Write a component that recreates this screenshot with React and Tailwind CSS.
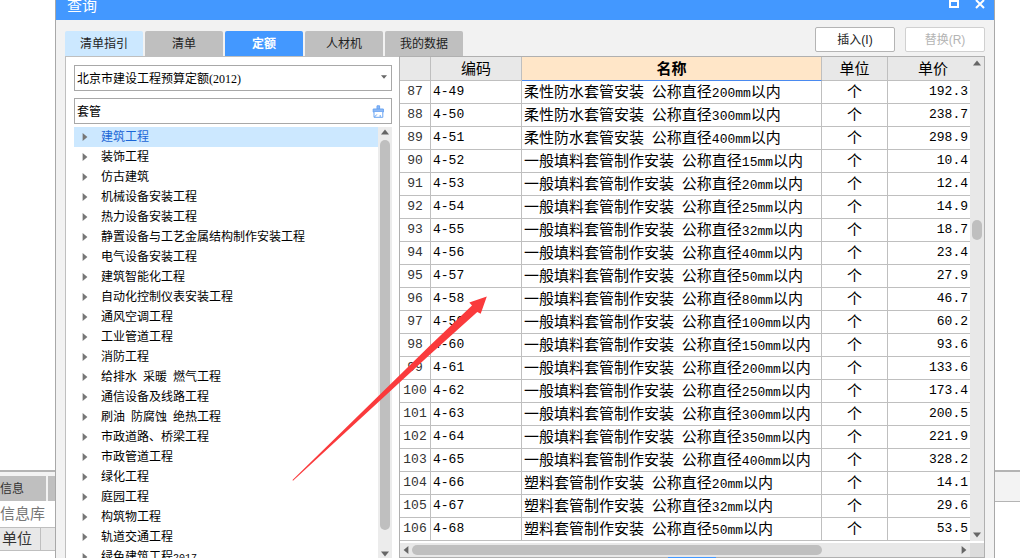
import { useState } from 'react';
import clsx from 'clsx';

const TABS = ['清单指引', '清单', '定额', '人材机', '我的数据'];

const TREE = [
  '建筑工程', '装饰工程', '仿古建筑', '机械设备安装工程', '热力设备安装工程',
  '静置设备与工艺金属结构制作安装工程', '电气设备安装工程', '建筑智能化工程',
  '自动化控制仪表安装工程', '通风空调工程', '工业管道工程', '消防工程',
  '给排水 采暖 燃气工程', '通信设备及线路工程', '刷油 防腐蚀 绝热工程',
  '市政道路、桥梁工程', '市政管道工程', '绿化工程', '庭园工程', '构筑物工程',
  '轨道交通工程', '绿色建筑工程2017',
];

const ROWS = [
  [87, '4-49', '柔性防水套管安装 公称直径200mm以内', '192.3'],
  [88, '4-50', '柔性防水套管安装 公称直径300mm以内', '238.7'],
  [89, '4-51', '柔性防水套管安装 公称直径400mm以内', '298.9'],
  [90, '4-52', '一般填料套管制作安装 公称直径15mm以内', '10.4'],
  [91, '4-53', '一般填料套管制作安装 公称直径20mm以内', '12.4'],
  [92, '4-54', '一般填料套管制作安装 公称直径25mm以内', '14.9'],
  [93, '4-55', '一般填料套管制作安装 公称直径32mm以内', '18.7'],
  [94, '4-56', '一般填料套管制作安装 公称直径40mm以内', '23.4'],
  [95, '4-57', '一般填料套管制作安装 公称直径50mm以内', '27.9'],
  [96, '4-58', '一般填料套管制作安装 公称直径80mm以内', '46.7'],
  [97, '4-59', '一般填料套管制作安装 公称直径100mm以内', '60.2'],
  [98, '4-60', '一般填料套管制作安装 公称直径150mm以内', '93.6'],
  [99, '4-61', '一般填料套管制作安装 公称直径200mm以内', '133.6'],
  [100, '4-62', '一般填料套管制作安装 公称直径250mm以内', '173.4'],
  [101, '4-63', '一般填料套管制作安装 公称直径300mm以内', '200.5'],
  [102, '4-64', '一般填料套管制作安装 公称直径350mm以内', '221.9'],
  [103, '4-65', '一般填料套管制作安装 公称直径400mm以内', '328.2'],
  [104, '4-66', '塑料套管制作安装 公称直径20mm以内', '14.1'],
  [105, '4-67', '塑料套管制作安装 公称直径32mm以内', '29.6'],
  [106, '4-68', '塑料套管制作安装 公称直径50mm以内', '53.5'],
];

const mono = "font-['Liberation_Mono',monospace]";

// Half-width runs are set in a monospace face, about half as wide as a CJK glyph
const Mixed = ({ text, size }) =>
  text.split(/([\x20-\x7e]+)/).map((part, i) =>
    i % 2 ? <span key={i} className={clsx(mono, size, 'leading-none whitespace-pre')}>{part}</span> : part
  );

const Arrow = ({ d, className }) => (
  <svg viewBox="0 0 10 10" className={clsx('shrink-0', className)} fill="currentColor" aria-hidden="true">
    <path d={d} />
  </svg>
);
const UP = 'M0 8 L5 2 L10 8Z';
const DOWN = 'M0 2 L5 8 L10 2Z';
const LEFT = 'M8 0 L2 5 L8 10Z';
const RIGHT = 'M2 0 L8 5 L2 10Z';

function BackgroundLeft() {
  return (
    <div className="w-[55px] shrink-0 flex flex-col justify-end overflow-hidden whitespace-nowrap text-[#333]">
      <div className="h-[31px] pt-1 flex gap-0.5 border-t-2 border-[#b4b4b4] bg-[#f3f3f3]">
        <div className="w-[46px] bg-[#bfbfbf] text-xs leading-[26px]">信息</div>
        <div className="flex-1 bg-[#bfbfbf]" />
      </div>
      <div className="h-[26px] text-[15px] leading-[26px] text-[#777]">信息库</div>
      <div className="h-6 flex border-y border-[#bfbfbf] bg-[#e8e8e8] text-[15px] leading-[22px]">
        <div className="w-[41px] pl-0.5 border-r border-[#bfbfbf]">单位</div>
      </div>
      <div className="h-[7px]" />
    </div>
  );
}

function BackgroundRight() {
  return (
    <div className="w-[25px] shrink-0 flex flex-col justify-end">
      <div className="h-8 border-t-2 border-b border-[#b4b4b4] bg-[#f3f3f3]" />
      <div className="h-14" />
    </div>
  );
}

function CategoryPanel() {
  const [keyword, setKeyword] = useState('套管');
  const [active, setActive] = useState(0);

  return (
    <div className="w-[334px] shrink-0 flex flex-col pt-2 pl-2 pr-[7px] bg-white border-l border-t border-[#bfbfbf] min-h-0">
      <div className="relative shrink-0">
        <select
          aria-label="定额库"
          className="block w-full h-[26px] pl-0.5 pt-0.5 appearance-none bg-white border border-[#a8a8a8] text-xs text-black outline-none font-['Liberation_Serif','Noto_Sans_CJK_SC',serif]"
        >
          <option>北京市建设工程预算定额(2012)</option>
        </select>
        <Arrow d={DOWN} className="absolute right-[5px] top-[9px] size-1.5 text-[#666] pointer-events-none" />
      </div>

      <div className="mt-[7px] h-[26px] shrink-0 flex items-center border border-[#a8a8a8] pr-1.5">
        <input
          aria-label="查询关键字"
          value={keyword}
          onChange={(e) => setKeyword(e.target.value)}
          className="flex-1 min-w-0 pl-0.5 pt-0.5 text-xs text-black outline-none"
        />
        <button aria-label="清除" onClick={() => setKeyword('')}>
          <svg viewBox="0 0 13 13" className="size-[13px]" aria-hidden="true">
            <path d="M5 0.8h2.6v3.4H5z" fill="#8db8f5" stroke="#6ba5f2" />
            <path d="M1.2 4h10.2v3H1.2z" fill="#8db8f5" stroke="#6ba5f2" />
            <path d="M2 7v5.3h8.8V7" fill="#fff" stroke="#6ba5f2" />
            <path d="M2.5 12l2.4-2.6M8.2 12V10" stroke="#6ba5f2" fill="none" />
          </svg>
        </button>
      </div>

      <div className="mt-[3px] flex-1 min-h-0 flex">
        <ul className="flex-1 min-w-0 overflow-hidden text-xs leading-5 text-black">
          {TREE.map((name, i) => (
            <li key={name}>
              <button
                onClick={() => setActive(i)}
                className={clsx('w-full h-5 flex items-center pl-[7px] gap-3 text-left', i === active && 'bg-[#cce8ff] text-[#1c66d6]')}
              >
                <Arrow d={RIGHT} className="size-2 text-[#777]" />
                <span><Mixed text={name} size="text-[10px]" /></span>
              </button>
            </li>
          ))}
        </ul>
        <div className="w-[14px] shrink-0 flex flex-col items-center gap-1 bg-[#ececec] text-[#666] pt-px">
          <Arrow d={UP} className="size-2" />
          <div className="flex-1 w-2.5 mb-4 rounded-full bg-[#bfbfbf]" />
          <Arrow d={DOWN} className="size-2" />
        </div>
      </div>
    </div>
  );
}

const th = 'h-6 p-0 font-normal border-r border-b border-[#bfbfbf]';
const td = 'h-[23px] p-0 border-r border-b border-[#bfbfbf]';

function QuotaTable() {
  return (
    <div className="flex-1 min-w-0 flex flex-col bg-white border-l border-t border-r border-[#b0b0b0]">
      <div className="flex">
        <table className="flex-1 min-w-0 w-full table-fixed border-separate border-spacing-0 whitespace-nowrap text-[15px] leading-[22px] text-black">
          <colgroup>
            <col className="w-[31px]" />
            <col className="w-[91px]" />
            <col />
            <col className="w-[66px]" />
            <col className="w-[82px]" />
          </colgroup>
          <thead className="bg-[#e8e8e8]">
            <tr>
              <th className={th} aria-label="序号" />
              <th className={th}>编码</th>
              <th className="h-6 p-0 font-bold border-r border-b border-r-[#bfbfbf] border-b-[#4a8af0] bg-[#ffe6c8]">名称</th>
              <th className={th}>单位</th>
              <th className="h-6 p-0 pl-2 font-normal border-b border-[#bfbfbf]">单价</th>
            </tr>
          </thead>
          <tbody>
            {ROWS.map(([no, code, name, price]) => (
              <tr key={no}>
                <td className={clsx(td, mono, 'text-center text-[13px] text-[#333]')}>{no}</td>
                <td className={clsx(td, mono, 'pl-0.5 text-[13px]')}>{code}</td>
                <td className={clsx(td, 'pl-0.5')}><Mixed text={name} size="text-[13px]" /></td>
                <td className={clsx(td, 'text-center')}>个</td>
                <td className={clsx('h-[23px] p-0 pr-0.5 text-right text-[13px] border-b border-[#bfbfbf]', mono)}>{price}</td>
              </tr>
            ))}
          </tbody>
        </table>
        <div className="w-[14px] shrink-0 flex flex-col items-center bg-[#e8e8e8] text-[#666] py-0.5">
          <Arrow d={UP} className="size-2" />
          <div className="flex-[152]" />
          <div className="h-5 w-2.5 rounded-full bg-[#bfbfbf]" />
          <div className="flex-[290]" />
          <Arrow d={DOWN} className="size-2" />
        </div>
      </div>
      <div className="mt-0.5 h-[14px] shrink-0 flex bg-[#e8e8e8] text-[#666]">
        <div className="flex-1 flex items-center px-0.5">
          <Arrow d={LEFT} className="size-2" />
          <div className="flex-1 px-0.5">
            <div className="h-2.5 w-3/4 rounded-full bg-[#bfbfbf]" />
          </div>
          <Arrow d={RIGHT} className="size-2" />
        </div>
        <div className="w-[14px] bg-[#dcdcdc]" />
      </div>
      <div className="flex-1 flex justify-center bg-[#b0b0b0]">
        <div className="w-12 bg-[#4398ff]" />
      </div>
    </div>
  );
}

export default function App() {
  const [tab, setTab] = useState(2);

  return (
    <div className="relative h-screen overflow-hidden flex bg-white font-['Liberation_Sans','Noto_Sans_CJK_SC',sans-serif]">
      <BackgroundLeft />

      <div className="flex-1 min-w-0 flex flex-col border-x border-[#a8a8a8] bg-[#f2f2f2]">
        <header className="h-5 shrink-0 flex justify-between pl-[11px] pr-[9px] bg-[#4398ff] text-white">
          <h1 className="text-[15px] leading-3">查询</h1>
          <div className="flex gap-4">
            <button aria-label="最大化" className="h-2.5">
              <svg viewBox="0 0 10 10" className="size-2.5" fill="none" stroke="currentColor" strokeWidth="2">
                <path d="M1 -1h8v8H1zM0 1h10" />
              </svg>
            </button>
            <button aria-label="关闭" className="h-2.5">
              <svg viewBox="0 0 10 10" className="size-2.5" fill="none" stroke="currentColor" strokeWidth="2">
                <path d="M1 0l8 8M9 0l-8 8" />
              </svg>
            </button>
          </div>
        </header>

        <div className="h-9 shrink-0 flex justify-between pl-[9px] pr-[9px]">
          <div className="flex gap-0.5 pt-[11px]" role="tablist">
            {TABS.map((name, i) => (
              <button
                key={name}
                role="tab"
                aria-selected={i === tab}
                onClick={() => setTab(i)}
                className={clsx(
                  'w-[78px] h-[25px] rounded-t-xs text-xs',
                  i === tab ? 'bg-[#4398ff] text-white font-bold' : i === 0 ? 'bg-[#cce8ff] text-[#222]' : 'bg-[#bfbfbf] text-[#222]'
                )}
              >
                {name}
              </button>
            ))}
          </div>
          <div className="flex gap-2.5 pt-[7px]">
            <button className="w-20 h-[25px] rounded-xs border border-[#b4b4b4] bg-white text-xs text-[#222]">插入(I)</button>
            <button disabled className="w-20 h-[25px] rounded-xs border border-[#d0d0d0] bg-white text-xs text-[#b4b4b4]">替换(R)</button>
          </div>
        </div>

        <main className="flex-1 min-h-0 flex pl-[9px] pr-[9px]">
          <CategoryPanel />
          <QuotaTable />
        </main>
      </div>

      <BackgroundRight />

      <svg viewBox="0 0 196 186" className="absolute left-[292px] top-[295px] w-[196px] h-[186px] pointer-events-none" aria-hidden="true">
        <path d="M0.5 185 L138 50.5 L180 10.5 L177.3 7.5 L194.8 1.5 L188.7 18.7 L185.3 17 L138 59.5 L1 185.8Z" fill="#fa3a3c" />
      </svg>
    </div>
  );
}
